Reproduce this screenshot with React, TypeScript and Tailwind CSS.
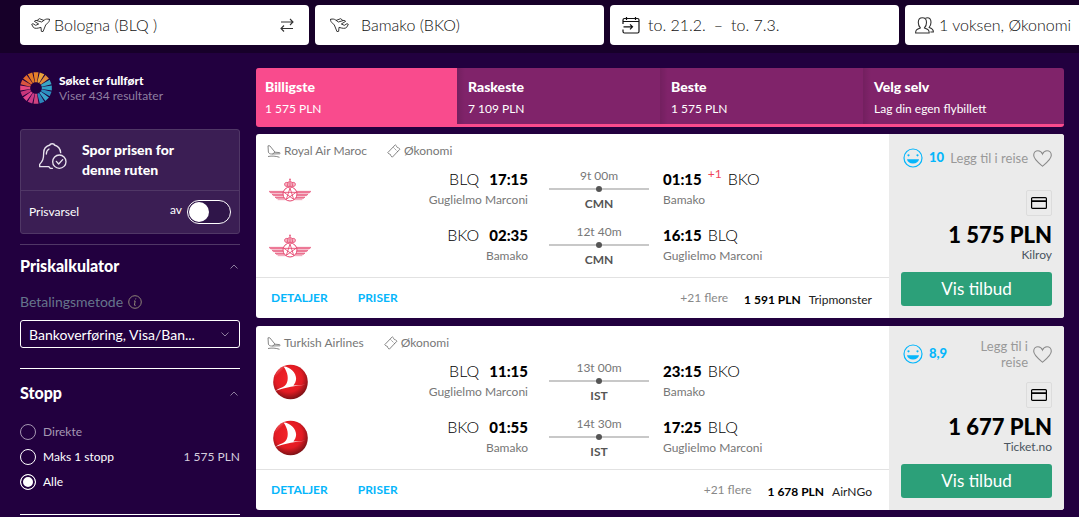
import type { ReactNode } from "react";

type Leg = {
  from: string;
  fromCity: string;
  dep: string;
  duration: string;
  via: string;
  arr: string;
  plus?: string;
  to: string;
  toCity: string;
};

type Offer = {
  airline: string;
  logo: "ram" | "thy";
  score: string;
  price: string;
  agent: string;
  altPrice: string;
  altAgent: string;
  legs: Leg[];
};

const offers: Offer[] = [
  {
    airline: "Royal Air Maroc",
    logo: "ram",
    score: "10",
    price: "1 575 PLN",
    agent: "Kilroy",
    altPrice: "1 591 PLN",
    altAgent: "Tripmonster",
    legs: [
      { from: "BLQ", fromCity: "Guglielmo Marconi", dep: "17:15", duration: "9t 00m", via: "CMN", arr: "01:15", plus: "+1", to: "BKO", toCity: "Bamako" },
      { from: "BKO", fromCity: "Bamako", dep: "02:35", duration: "12t 40m", via: "CMN", arr: "16:15", to: "BLQ", toCity: "Guglielmo Marconi" },
    ],
  },
  {
    airline: "Turkish Airlines",
    logo: "thy",
    score: "8,9",
    price: "1 677 PLN",
    agent: "Ticket.no",
    altPrice: "1 678 PLN",
    altAgent: "AirNGo",
    legs: [
      { from: "BLQ", fromCity: "Guglielmo Marconi", dep: "11:15", duration: "13t 00m", via: "IST", arr: "23:15", to: "BKO", toCity: "Bamako" },
      { from: "BKO", fromCity: "Bamako", dep: "01:55", duration: "14t 30m", via: "IST", arr: "17:25", to: "BLQ", toCity: "Guglielmo Marconi" },
    ],
  },
];

const tabs = [
  { title: "Billigste", sub: "1 575 PLN" },
  { title: "Raskeste", sub: "7 109 PLN" },
  { title: "Beste", sub: "1 575 PLN" },
  { title: "Velg selv", sub: "Lag din egen flybillett" },
];

function PlaneIcon({ flip = false }: { flip?: boolean }) {
  return (
    <svg viewBox="0 0 57 42" className={flip ? "h-[14px] w-[19px] shrink-0 -scale-x-100" : "h-[14px] w-[19px] shrink-0"} fill="none" stroke="#222" strokeWidth="2.700" strokeLinejoin="round" strokeLinecap="round">
      <path d="M55 4c-5-2-11-1-15 2l-8 6-17-5-5 3 13 8-9 4-8-5-4 2 5 9c5 5 13 3 23 0l1 12 5 1 8-20 8-8c3-3 4-6 3-9z" />
      <path d="M19 7l6-5 13 5" />
    </svg>
  );
}

function SwapIcon() {
  return (
    <svg viewBox="0 0 14 14" className="h-[14px] w-[14px]" fill="none" stroke="#333" strokeWidth="1.1">
      <path d="M1 4h12M10 1l3 3-3 3M13 10.500H1M4 7.500l-3 3 3 3" />
    </svg>
  );
}

function CalendarIcon() {
  return (
    <svg viewBox="0 0 18 18" className="h-[18px] w-[18px] shrink-0" fill="none" stroke="#111" strokeWidth="1.2">
      <path d="M1 8V4a1.500 1.500 0 0 1 1.500-1.500h13A1.500 1.500 0 0 1 17 4v11.500a1.500 1.500 0 0 1-1.500 1.500h-13A1.500 1.500 0 0 1 1 15.500V13.500M1 5.500h16M4.500 1v3M13.500 1v3M1.500 10.800h9M8 8.300l2.500 2.500L8 13.300" />
    </svg>
  );
}

function PeopleIcon() {
  return (
    <svg viewBox="0 0 19 17" className="h-[17px] w-[19px] shrink-0" fill="none" stroke="#333" strokeWidth="1.1" strokeLinejoin="round">
      <path d="M.6 16c0-3 .9-3.700 4.800-5C4 9.500 3.300 8 3.300 5.400 3.300 2.500 4.800.7 7.400.7s4.100 1.800 4.100 4.700c0 2.600-.7 4.100-2.100 5.600 3.900 1.300 4.800 2 4.800 5z" />
      <path d="M10.500 1.200c.5-.3 1-.5 1.700-.5 2.400 0 3.800 1.700 3.800 4.600 0 2.400-.7 3.800-1.900 5.200 3 .9 4.300 1.700 4.300 4.500h-3" />
    </svg>
  );
}

const rayColors = ["#e8812a", "#e9a23a", "#e08a3a", "#3aa6c4", "#2f9fc6", "#2b8fc0", "#3aa5cc", "#2c86bb", "#d0427f", "#c93a86", "#e0458e", "#c7357b", "#e5487f", "#d9553f", "#e0682c", "#e57a26"];

function Sunburst() {
  return (
    <svg viewBox="0 0 32 32" className="h-8 w-8 shrink-0" aria-hidden="true">
      {rayColors.map((c, i) => (
        <path key={i} d="M13.500 0.200h5L17 10.200h-2z" fill={c} transform={`rotate(${i * 22.5} 16 16)`} />
      ))}
    </svg>
  );
}

function BellIcon() {
  return (
    <svg viewBox="0 0 84 78" className="h-[26px] w-[28px] shrink-0" fill="none" stroke="#e9e4ee" strokeWidth="4" strokeLinecap="round" strokeLinejoin="round">
      <path d="M65 29C64 17 57 9 46 6c0-5-13-5-13 0C20 9 14 19 14 30c0 18-3 24-12 34v7h28c2 6 8 6 10 5" />
      <path d="M22 33c0-8 3-12 8-15" />
      <circle cx="61" cy="56" r="20" />
      <path d="M52 55l7 8 12-13" />
    </svg>
  );
}

function Chevron({ up = false }: { up?: boolean }) {
  return (
    <svg viewBox="0 0 8 5" className="h-[5px] w-2" fill="none" stroke="#8d7d9d" strokeWidth="1">
      <path d={up ? "M.5 4.500L4 1l3.500 3.500" : "M.5.500L4 4 7.500.500"} />
    </svg>
  );
}

function TailIcon() {
  return (
    <svg viewBox="0 0 14 13" className="h-[13px] w-[14px]" fill="none" stroke="#777" strokeWidth="0.9" strokeLinejoin="round">
      <path d="M1 .8h1.800L8 7.200l4.500.4c.8.100.9 1 .1 1.200l-8 .2C2.800 9 1.700 8.300 1.400 7z" />
      <path d="M1 11.500c4-.8 8-.4 11.500.8M8 7.200L5.500 9" />
    </svg>
  );
}

function TicketIcon() {
  return (
    <svg viewBox="0 0 14 14" className="h-[14px] w-[14px]" fill="none" stroke="#777" strokeWidth="0.9" strokeLinejoin="round">
      <path d="M8.300.8l1.400 1.300c-.2.900.6 1.700 1.600 1.500l1.600 1.600-7.600 8-1.500-1.500c.2-1-.7-1.800-1.600-1.600L.8 8.600z" />
      <path d="M6.500 3.500l4.500 4.500" strokeDasharray="1.500 1" />
    </svg>
  );
}

function SmileIcon() {
  return (
    <svg viewBox="0 0 20 20" className="h-5 w-5 shrink-0" fill="none" stroke="#06b6fb" strokeWidth="1.200">
      <circle cx="10" cy="10" r="9" />
      <path d="M4 11.300h12c-.4 2.600-2.700 4.200-6 4.200s-5.600-1.600-6-4.200z" fill="#06b6fb" stroke="none" />
      <circle cx="5.500" cy="7.300" r="1.100" fill="#06b6fb" stroke="none" />
      <circle cx="14.500" cy="7.300" r="1.100" fill="#06b6fb" stroke="none" />
    </svg>
  );
}

function HeartIcon() {
  return (
    <svg viewBox="0 0 19 17" className="h-[17px] w-[19px] shrink-0" fill="none" stroke="#8a8a8a" strokeWidth="1.100">
      <path d="M9.500 16.200C5 12.500.7 9.200.7 5.300.7 2.600 2.700.7 5 .7c2 0 3.600 1.200 4.500 3.300C10.400 1.900 12 .7 14 .7c2.300 0 4.300 1.900 4.300 4.600 0 3.900-4.300 7.200-8.800 10.900z" />
    </svg>
  );
}

function CardIcon() {
  return (
    <svg viewBox="0 0 16 12" className="h-3 w-4" fill="none" stroke="#000" strokeWidth="1.200">
      <rect x=".6" y=".6" width="14.800" height="10.800" rx="1" />
      <path d="M.6 4.100h14.800" strokeWidth="1.800" />
    </svg>
  );
}

function AirlineLogo({ kind }: { kind: "ram" | "thy" }) {
  if (kind === "ram") {
    return (
      <svg viewBox="0 0 126 72" className="h-6 w-[42px]" fill="none" stroke="#e5446d" strokeWidth="3">
        <path d="M0 40h44l-2 5H5zM9 49h32v4H14zM18 57h25l2 4H22zM26 65h24M126 40H82l2 5h37zM117 49H85v4h27zM108 57H83l-2 4h23zM100 65H76" fill="#f08aa3" strokeWidth="1.600" />
        <circle cx="63" cy="48" r="21" />
        <path d="M63 30l11 34-29-21h36L52 64z" strokeWidth="2.600" />
        <path d="M50 25c-8-8 0-14 7-11 2-6 10-6 12 0 7-3 15 3 7 11z" fill="#f5b3c2" strokeWidth="2.600" />
        <path d="M63 10V2M60 4h6M55 24l2-10M71 24l-2-10M63 24V12" strokeWidth="2.200" />
      </svg>
    );
  }
  return (
    <svg viewBox="0 0 103 106" className="h-9 w-[35px]">
      <defs>
        <radialGradient id="redBall" cx="45%" cy="40%" r="60%">
          <stop offset="0" stopColor="#f3262b" />
          <stop offset="0.650" stopColor="#e31b23" />
          <stop offset="1" stopColor="#7d1216" />
        </radialGradient>
        <linearGradient id="shine" x1="0" y1="0" x2="0.600" y2="1">
          <stop offset="0" stopColor="#fff" stopOpacity="0.700" />
          <stop offset="0.500" stopColor="#fff" stopOpacity="0" />
        </linearGradient>
      </defs>
      <circle cx="51.500" cy="53" r="51" fill="url(#redBall)" />
      <path d="M3 52C4 26 20 9 38 5 24 20 15 36 12 60z" fill="url(#shine)" />
      <path d="M31 7c20 1 37 18 37 36 0 9-4 15-8 20l36-2C68 63 38 68 7 79c14-9 27-11 32-20 8-14 5-34-8-52z" fill="#fff" />
    </svg>
  );
}

function Field({ children }: { children: ReactNode }) {
  return <div className="flex h-10 w-[289px] shrink-0 items-center rounded bg-white text-[16px] font-light text-[#111]">{children}</div>;
}

function LegRow({ leg, logo }: { leg: Leg; logo: "ram" | "thy" }) {
  return (
    <div className="flex h-14 items-start">
      <div className="flex h-12 w-[68px] items-center justify-center">
        <AirlineLogo kind={logo} />
      </div>
      <div className="flex-1 pr-[21px] text-right">
        <div className="text-[16px] leading-[26px] text-black">
          <span className="mr-[10px] font-light">{leg.from}</span>
          <span className="text-[15px] font-black">{leg.dep}</span>
        </div>
        <div className="text-[12px] leading-4 text-[#777]">{leg.fromCity}</div>
      </div>
      <div className="w-[100px] text-center text-[12px] text-[#777]">
        <div className="leading-5">{leg.duration}</div>
        <div className="flex h-[6px] items-center justify-center bg-[linear-gradient(#c8c8c8,#c8c8c8)] bg-[length:100%_2px] bg-center bg-no-repeat">
          <span className="h-[6px] w-[6px] rounded-full bg-[#555]" />
        </div>
        <div className="pt-[2px] leading-5 font-bold text-[#555]">{leg.via}</div>
      </div>
      <div className="w-[240px] pl-[14px]">
        <div className="flex text-[16px] leading-[26px] text-black">
          <span className="mr-[6px] text-[15px] font-black">{leg.arr}</span>
          {leg.plus && <span className="mr-[6px] text-[12px] leading-4 text-[#f0455b]">{leg.plus}</span>}
          <span className="font-light">{leg.to}</span>
        </div>
        <div className="text-[12px] leading-4 text-[#777]">{leg.toCity}</div>
      </div>
    </div>
  );
}

function OfferCard({ offer }: { offer: Offer }) {
  return (
    <article className="flex h-[184px] overflow-hidden rounded-[3px] bg-white">
      <div className="flex min-w-0 flex-1 flex-col">
        <div className="flex h-8 items-center gap-5 px-[11px] pt-[2px] text-[12px] text-[#777]">
          <span className="flex items-center gap-[3px]"><TailIcon />{offer.airline}</span>
          <span className="flex items-center gap-[3px]"><TicketIcon />Økonomi</span>
        </div>
        {offer.legs.map((leg) => (
          <LegRow key={leg.dep} leg={leg} logo={offer.logo} />
        ))}
        <div className="-mt-px flex flex-1 items-center border-t border-[#e2e2e2] pr-[17px] pl-[15px] text-[12px]">
          <a href="#detaljer" className="mr-[30px] font-bold text-[#06b6fb]">DETALJER</a>
          <a href="#priser" className="font-bold text-[#06b6fb]">PRISER</a>
          <span className="ml-auto text-[#888]">+21 flere</span>
          <span className="mt-[3px] ml-4 font-bold text-black">{offer.altPrice}</span>
          <span className="mt-[3px] ml-2 text-[#222]">{offer.altAgent}</span>
        </div>
      </div>
      <div className="flex w-[175px] shrink-0 flex-col items-end bg-[#ebebeb] px-3 py-3">
        <div className="flex min-h-6 w-full items-center pl-[2px]">
          <SmileIcon />
          <span className="ml-[6px] text-[13px] font-black text-[#06b6fb]">{offer.score}</span>
          <button className="ml-auto flex items-center justify-end gap-[5px] text-right text-[13px] leading-4 text-[#999]">
            <span className={offer.score.length > 2 ? "w-16" : ""}>Legg til i reise</span>
            <HeartIcon />
          </button>
        </div>
        <div className="mt-auto flex h-[26px] w-[26px] items-center justify-center rounded-[2px] border border-[#dcdcdc]"><CardIcon /></div>
        <div className="mt-[7px] text-[22px] leading-6 font-black text-black">{offer.price}</div>
        <div className="text-[12px] leading-4 text-[#4a5560]">{offer.agent}</div>
        <button className="mt-[9px] h-[34px] w-full rounded-[3px] bg-[#2ca079] text-[17px] text-white">Vis tilbud</button>
      </div>
    </article>
  );
}

function SectionTitle({ children }: { children: string }) {
  return (
    <button className="flex w-full items-center justify-between pr-[2px] text-[16px] leading-6 font-black">
      {children}
      <Chevron up />
    </button>
  );
}

function StopOption({ label, price, dim, checked }: { label: string; price?: string; dim?: boolean; checked?: boolean }) {
  return (
    <label className={dim ? "flex h-[25px] items-center text-[12px] text-[#a597b2]" : "flex h-[25px] items-center text-[12px] text-white"}>
      <input
        type="radio"
        name="stops"
        defaultChecked={checked}
        className="mr-[7px] h-4 w-4 appearance-none rounded-full border border-current checked:bg-white checked:shadow-[inset_0_0_0_2px_#22003f]"
      />
      {label}
      {price && <span className="ml-auto text-[#d5cddd]">{price}</span>}
    </label>
  );
}

export default function App() {
  return (
    <div className="min-h-screen overflow-hidden bg-[#22003f] font-['Lato','Liberation_Sans',sans-serif] text-white">
      <header className="flex h-[53px] gap-[6px] overflow-hidden bg-[#170029] pt-[5px] pl-5">
        <Field>
          <label className="flex min-w-0 flex-1 items-center gap-1 pl-[11px]">
            <PlaneIcon />
            <input aria-label="Fra" defaultValue="Bologna (BLQ )" className="min-w-0 flex-1 outline-none" />
          </label>
          <button aria-label="Bytt" className="mr-[15px]"><SwapIcon /></button>
        </Field>
        <Field>
          <label className="flex min-w-0 flex-1 items-center gap-3 pl-[15px]">
            <PlaneIcon flip />
            <input aria-label="Til" defaultValue="Bamako (BKO)" className="min-w-0 flex-1 outline-none" />
          </label>
        </Field>
        <Field>
          <button className="flex flex-1 items-center pl-3">
            <CalendarIcon />
            <span className="ml-2">to. 21.2.</span>
            <span className="mx-2">–</span>
            <span>to. 7.3.</span>
          </button>
        </Field>
        <Field>
          <button className="flex flex-1 items-center gap-[5px] pl-[10px]">
            <PeopleIcon />
            1 voksen, Økonomi
          </button>
        </Field>
      </header>

      <div className="flex gap-4 pt-[15px] pr-[15px] pl-5">
        <aside className="w-[220px] shrink-0">
          <div className="mt-1 flex items-center gap-[7px] text-[12px] leading-[15px]">
            <Sunburst />
            <div>
              <div className="font-black">Søket er fullført</div>
              <div className="text-[#8f7fa0]">Viser 434 resultater</div>
            </div>
          </div>

          <section className="mt-[25px] rounded-[3px] border border-[#503766] bg-[#3b1e54]">
            <div className="flex h-[61px] items-center border-b border-[#503766] pl-[18px]">
              <div className="mb-2"><BellIcon /></div>
              <div className="ml-[15px] w-32 text-[14px] leading-5 font-black">Spor prisen for denne ruten</div>
            </div>
            <label className="flex h-[42px] items-center px-2 text-[12px]">
              <span className="flex-1">Prisvarsel</span>
              <span className="mr-[5px] mb-1">av</span>
              <input
                type="checkbox"
                role="switch"
                className="flex h-6 w-11 appearance-none items-center rounded-full border border-white bg-[#2f1549] px-px before:h-5 before:w-5 before:rounded-full before:bg-white before:content-[''] checked:justify-end"
              />
            </label>
          </section>

          <section className="mt-[10px] border-t border-[#503766] pt-[9px]">
            <SectionTitle>Priskalkulator</SectionTitle>
            <label htmlFor="pay" className="mt-[14px] flex items-center gap-[5px] text-[14px] leading-5 text-[#66758c]">
              Betalingsmetode
              <svg viewBox="0 0 14 14" className="h-[14px] w-[14px]" fill="none" stroke="#8f8478" strokeWidth="1">
                <circle cx="7" cy="7" r="6.300" />
                <path d="M7.800 3.400l-.2 1M6 6h1.200l-.8 4c0 .5.500.6 1.200.3" />
              </svg>
            </label>
            <div className="mt-[8px] grid items-center">
              <select id="pay" className="col-start-1 row-start-1 h-7 w-full appearance-none rounded-[3px] border border-white px-2 text-[14px] text-white">
                <option>Bankoverføring, Visa/Ban...</option>
              </select>
              <span className="pointer-events-none col-start-1 row-start-1 mr-[11px] justify-self-end"><Chevron /></span>
            </div>
          </section>

          <section className="mt-5 border-t border-white pt-3">
            <SectionTitle>Stopp</SectionTitle>
            <div className="mt-[14px]">
              <StopOption label="Direkte" dim />
              <StopOption label="Maks 1 stopp" price="1 575 PLN" />
              <StopOption label="Alle" checked />
            </div>
          </section>
          <hr className="mt-5 border-white" />
        </aside>

        <main className="min-w-0 flex-1">
          <div role="tablist" className="mb-[7px] grid h-[59px] grid-cols-[201fr_203fr_203fr_201fr] overflow-hidden rounded-[3px] border-b-3 border-[#f94b8d] bg-[#80236a]">
            {tabs.map((t, i) => (
              <button
                key={t.title}
                role="tab"
                aria-selected={i === 0}
                className={
                  i === 0
                    ? "bg-[#f94b8d] px-[9px] pt-1 text-left"
                    : "bg-[linear-gradient(90deg,rgba(0,0,0,0.1),transparent_8px)] px-[11px] pt-1 text-left"
                }
              >
                <div className="text-[14px] leading-5 font-black">{t.title}</div>
                <div className="mt-[2px] text-[12px] leading-5">{t.sub}</div>
              </button>
            ))}
          </div>
          <div className="flex flex-col gap-2">
            {offers.map((o) => (
              <OfferCard key={o.airline} offer={o} />
            ))}
          </div>
        </main>
      </div>
    </div>
  );
}
